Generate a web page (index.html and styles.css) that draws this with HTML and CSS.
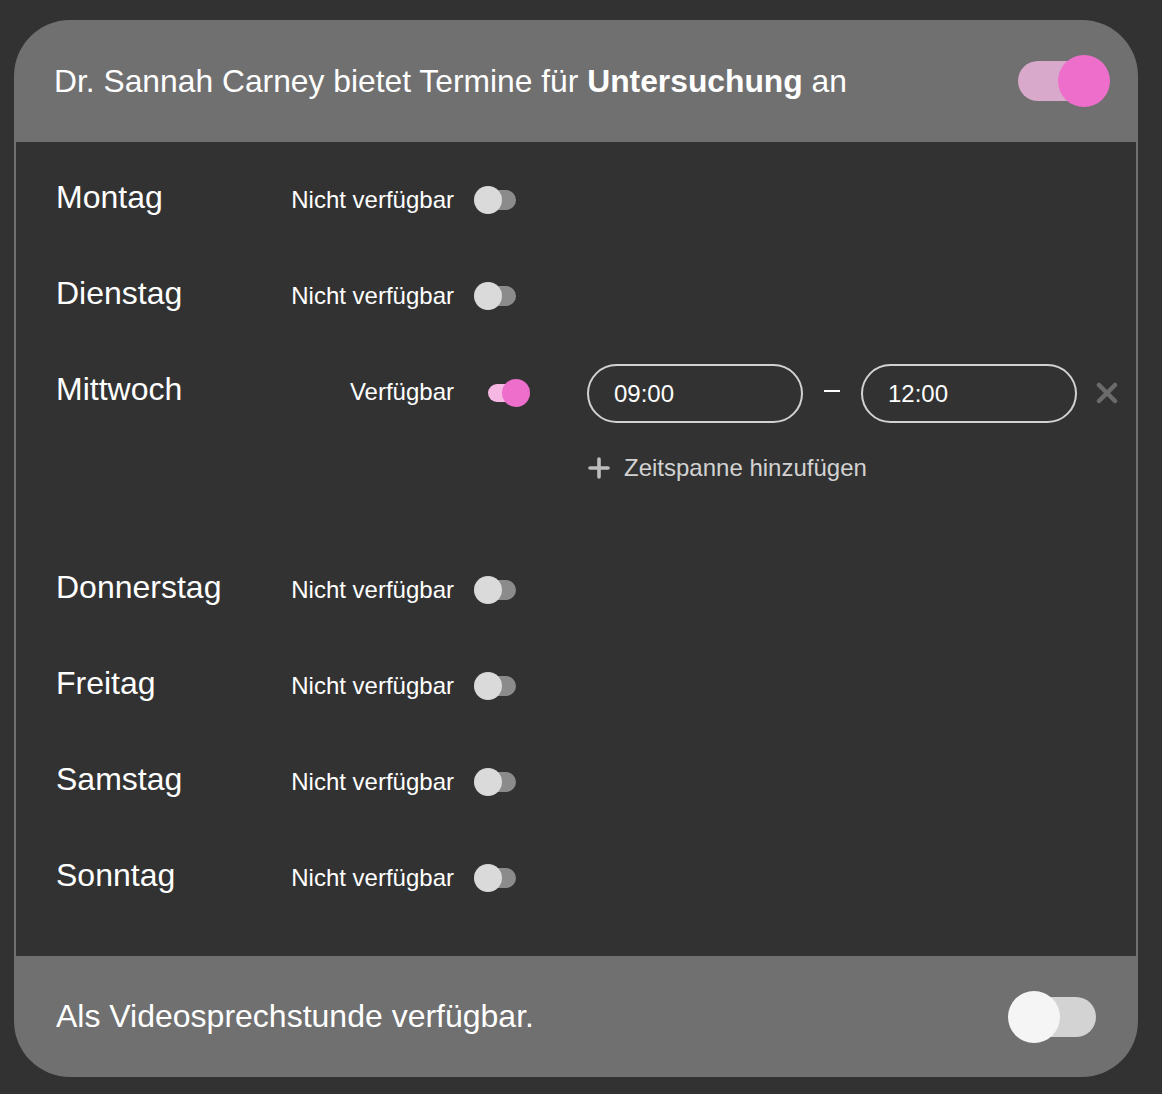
FILE: index.html
```html
<!DOCTYPE html>
<html lang="de">
<head>
<meta charset="utf-8">
<title>Termine</title>
<link rel="stylesheet" href="styles.css">
</head>
<body>
<div class="card">
  <header class="card-head">
    <div class="head-title">Dr. Sannah Carney bietet Termine für <b>Untersuchung</b> an</div>
    <div class="toggle-lg on"><span class="track"></span><span class="knob"></span></div>
  </header>

  <section class="days">
    <div class="day">
      <div class="day-name">Montag</div>
      <div class="status">Nicht verfügbar</div>
      <div class="switch-cell"><div class="toggle-sm"><span class="track"></span><span class="knob"></span></div></div>
    </div>
    <div class="day">
      <div class="day-name">Dienstag</div>
      <div class="status">Nicht verfügbar</div>
      <div class="switch-cell"><div class="toggle-sm"><span class="track"></span><span class="knob"></span></div></div>
    </div>
    <div class="day">
      <div class="day-name">Mittwoch</div>
      <div class="status">Verfügbar</div>
      <div class="switch-cell"><div class="toggle-sm on"><span class="track"></span><span class="knob"></span></div></div>
      <div class="ranges">
        <div class="range">
          <div class="time-input">09:00</div>
          <div class="dash"></div>
          <div class="time-input">12:00</div>
          <svg class="remove" width="22" height="22" viewBox="0 0 22 22"><path d="M3 3 L19 19 M19 3 L3 19" stroke="#6b6b6b" stroke-width="4.5" stroke-linecap="round" fill="none"/></svg>
        </div>
        <div class="add">
          <svg class="plus" width="22" height="22" viewBox="0 0 22 22"><path d="M11 2 V20 M2 11 H20" stroke="#bdbdbd" stroke-width="3.6" stroke-linecap="round" fill="none"/></svg>
          <span>Zeitspanne hinzufügen</span>
        </div>
      </div>
    </div>
    <div class="day">
      <div class="day-name">Donnerstag</div>
      <div class="status">Nicht verfügbar</div>
      <div class="switch-cell"><div class="toggle-sm"><span class="track"></span><span class="knob"></span></div></div>
    </div>
    <div class="day">
      <div class="day-name">Freitag</div>
      <div class="status">Nicht verfügbar</div>
      <div class="switch-cell"><div class="toggle-sm"><span class="track"></span><span class="knob"></span></div></div>
    </div>
    <div class="day">
      <div class="day-name">Samstag</div>
      <div class="status">Nicht verfügbar</div>
      <div class="switch-cell"><div class="toggle-sm"><span class="track"></span><span class="knob"></span></div></div>
    </div>
    <div class="day">
      <div class="day-name">Sonntag</div>
      <div class="status">Nicht verfügbar</div>
      <div class="switch-cell"><div class="toggle-sm"><span class="track"></span><span class="knob"></span></div></div>
    </div>
  </section>

  <footer class="card-foot">
    <div class="foot-title">Als Videosprechstunde verfügbar.</div>
    <div class="toggle-lg off"><span class="track"></span><span class="knob"></span></div>
  </footer>
</div>
</body>
</html>
```

FILE: styles.css
```css
html, body {
  margin: 0;
  padding: 0;
  background: #323232;
}
body {
  font-family: "Liberation Sans", Arial, sans-serif;
  color: #ffffff;
  padding: 20px 24px 16px 14px;
}
.card {
  width: 1124px;
  height: 1057px;
  background: #707070;
  border-radius: 56px;
  overflow: hidden;
  display: flex;
  flex-direction: column;
}
.card-head,
.card-foot {
  display: flex;
  align-items: center;
  justify-content: space-between;
  padding: 0 28px 0 40px;
  font-size: 32px;
  flex: none;
}
.card-head { height: 122px; font-size: 31.8px; }
.card-foot { height: 121px; padding-left: 42px; }
.head-title b { font-weight: 700; }

.toggle-lg {
  position: relative;
  width: 102px;
  height: 52px;
  flex: none;
}
.toggle-lg .track {
  position: absolute;
  left: 10px;
  top: 6px;
  width: 78px;
  height: 40px;
  border-radius: 20px;
}
.toggle-lg .knob {
  position: absolute;
  top: 0;
  width: 52px;
  height: 52px;
  border-radius: 50%;
}
.toggle-lg.on .track { background: #d8a9cb; }
.toggle-lg.on .knob { right: 0; background: #ee6ecc; }
.toggle-lg.off .track { background: #d3d3d3; }
.toggle-lg.off .knob { left: 0; background: #f5f5f5; }

.days {
  flex: 1;
  background: #323232;
  margin: 0 2px;
  padding: 7px 0 33px 40px;
}
.day {
  display: flex;
  align-items: flex-start;
}
.day-name {
  width: 233px;
  height: 96px;
  line-height: 96px;
  font-size: 32px;
  flex: none;
}
.status {
  box-sizing: border-box;
  width: 165px;
  height: 96px;
  padding-top: 6px;
  line-height: 90px;
  font-size: 24px;
  text-align: right;
  flex: none;
}
.switch-cell {
  width: 133px;
  height: 96px;
  display: flex;
  align-items: center;
  flex: none;
}
.toggle-sm {
  position: relative;
  width: 42px;
  height: 28px;
  margin-left: 20px;
  margin-top: 6px;
}
.toggle-sm .track {
  position: absolute;
  top: 4px;
  height: 20px;
  border-radius: 10px;
}
.toggle-sm .knob {
  position: absolute;
  top: 0;
  width: 28px;
  height: 28px;
  border-radius: 50%;
}
.toggle-sm .track { left: 2px; right: 0; background: #8b8b8b; }
.toggle-sm .knob { left: 0; background: #dadada; }
.toggle-sm.on { margin-left: 34px; margin-top: 8px; }
.toggle-sm.on .track { left: 0; right: 8px; top: 5px; height: 18px; background: #f6b8e2; }
.toggle-sm.on .knob { left: auto; right: 0; background: #ee6ecc; }

.ranges {
  padding: 23px 0 56px 0;
}
.range {
  display: flex;
  align-items: center;
}
.time-input {
  box-sizing: border-box;
  width: 216px;
  height: 59px;
  border: 2px solid #d2d2d2;
  border-radius: 30px;
  padding-left: 25px;
  font-size: 24px;
  line-height: 55px;
}
.dash {
  width: 16px;
  height: 2px;
  background: #ffffff;
  margin: 0 21px;
  position: relative;
  top: -3px;
}
.remove {
  margin-left: 19px;
  margin-top: -2px;
}
.add {
  display: flex;
  align-items: center;
  height: 30px;
  margin-top: 30px;
  color: #d2d2d2;
  font-size: 24px;
}
.plus {
  margin-left: 1px;
  margin-right: 14px;
}
```
